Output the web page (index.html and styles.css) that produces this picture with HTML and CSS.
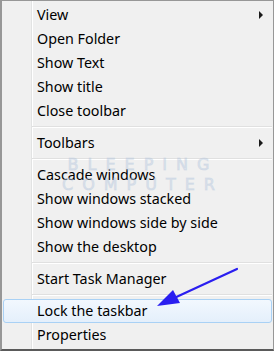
FILE: index.html
```html
<!DOCTYPE html>
<html lang="en">
<head>
    <meta charset="UTF-8">
    <title>Taskbar Menu</title>
    <link rel="stylesheet" href="styles.css">
</head>
<body>

    <!-- Context Menu -->
    <div class="menu">
        <div class="item">View <span class="sub-arrow"></span></div>
        <div class="item">Open Folder</div>
        <div class="item">Show Text</div>
        <div class="item">Show title</div>
        <div class="item">Close toolbar</div>
        <div class="separator"></div>
        <div class="item">Toolbars <span class="sub-arrow"></span></div>
        <div class="separator"></div>
        <div class="item">Cascade windows</div>
        <div class="item">Show windows stacked</div>
        <div class="item">Show windows side by side</div>
        <div class="item">Show the desktop</div>
        <div class="separator"></div>
        <div class="item">Start Task Manager</div>
        <div class="separator"></div>
        <div class="item active">Lock the taskbar</div>
        <div class="item">Properties</div>

        <!-- Watermark -->
        <div class="watermark">
            <span>BLEEPING</span>
            <span>COMPUTER</span>
        </div>

        <!-- Pointer arrow -->
        <svg class="pointer" width="274" height="351" viewBox="0 0 274 351">
            <line x1="237" y1="269" x2="172" y2="299" stroke="#2a1ef0" stroke-width="2.2" stroke-linecap="round"/>
            <polygon points="157,306 173,290 180,303" fill="#2a1ef0"/>
        </svg>
    </div>

</body>
</html>
```

FILE: styles.css
```css
/* Reset */
* {
    margin: 0;
    padding: 0;
    box-sizing: border-box;
}

body {
    width: 274px;
    height: 351px;
    background: #ffffff;
    font-family: 'Noto Sans', sans-serif;
}

/* Menu */
.menu {
    position: relative;
    width: 274px;
    height: 351px;
    border: 1px solid #979797;
    border-left-width: 2px;
    border-bottom: 2px solid #5a5a5a;
    padding: 2px 0;
    background: linear-gradient(to right, #f0f0f0 29px, #e2e3e3 29px, #e2e3e3 30px, #ffffff 30px, #ffffff 31px, #f0f0f0 31px);
    overflow: hidden;
}

.item {
    height: 24px;
    line-height: 24px;
    padding-left: 35px;
    padding-right: 10px;
    font-size: 14.3px;
    color: #000;
    display: flex;
    align-items: center;
    justify-content: space-between;
}

.item.active {
    margin: 0 1px;
    padding-left: 33px;
    border: 1px solid #a9d1f5;
    border-radius: 3px;
    background: linear-gradient(to bottom, #f2f8fe, #e4effb);
}

/* Submenu arrow */
.sub-arrow {
    width: 0;
    height: 0;
    border-top: 4px solid transparent;
    border-bottom: 4px solid transparent;
    border-left: 4px solid #1a1a1a;
}

/* Separator */
.separator {
    height: 8px;
    margin-left: 30px;
    margin-right: 1px;
    display: flex;
    flex-direction: column;
    justify-content: center;
}

.separator::before {
    content: "";
    display: block;
    height: 1px;
    background: #e0e0e0;
}

.separator::after {
    content: "";
    display: block;
    height: 1px;
    background: #ffffff;
}

/* Watermark */
.watermark {
    position: absolute;
    top: 154px;
    left: 46px;
    width: 190px;
    display: flex;
    flex-direction: column;
    align-items: center;
    font-family: 'DejaVu Sans', sans-serif;
    font-size: 16px;
    line-height: 20px;
    letter-spacing: 9px;
    color: rgba(195, 210, 230, 0.4);
    -webkit-text-stroke: 1px rgba(170, 190, 215, 0.3);
    pointer-events: none;
}

/* Blue pointer */
.pointer {
    position: absolute;
    top: -1px;
    left: -2px;
    pointer-events: none;
}
```
